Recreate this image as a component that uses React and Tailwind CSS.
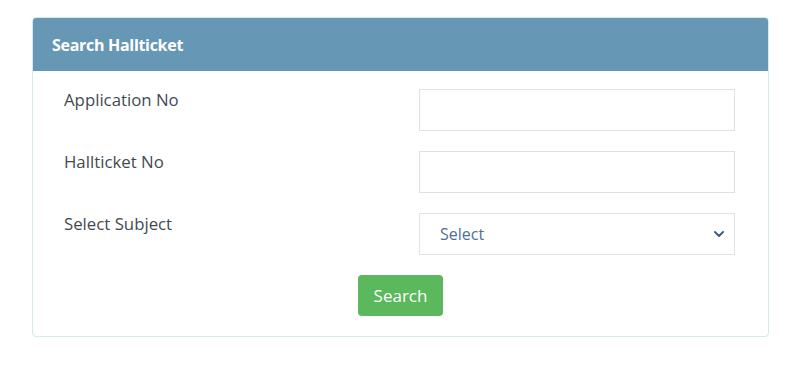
import { ChevronDown } from 'lucide-react'

const fields = [
  { label: 'Application No', type: 'text' },
  { label: 'Hallticket No', type: 'text' },
  { label: 'Select Subject', type: 'select' },
]

const App = () => {
  return (
    <div className="w-[802px] h-[372px] bg-white pt-[17px] pl-[32px] font-['Open_Sans',sans-serif]">
      <div className="w-[737px] border border-[#d3e9ed] rounded-[4px] overflow-hidden">
        <div className="h-[53px] bg-[#6697b4] flex items-center px-[19px]">
          <h2 className="text-white font-bold text-[16px] tracking-[-0.3px]">Search Hallticket</h2>
        </div>

        <div className="px-[31px] pt-[18px] pb-[20px]">
          <div className="flex flex-col gap-[20px]">
            {fields.map((field) => (
              <div key={field.label} className="flex items-start">
                <label className="w-[355px] text-[16.8px] text-[#3f4a52] leading-[22px]">
                  {field.label}
                </label>
                {field.type === 'select' ? (
                  <div className="w-[316px] h-[42px] border border-[#dde4ea] flex items-center justify-between pl-[20px] pr-[7px]">
                    <span className="text-[16px] text-[#4f6f97]">Select</span>
                    <ChevronDown size={16} strokeWidth={3} className="text-[#3c5f8a]" />
                  </div>
                ) : (
                  <input
                    type="text"
                    className="w-[316px] h-[42px] border border-[#dde2e8] outline-none px-3"
                  />
                )}
              </div>
            ))}
          </div>

          <div className="flex justify-center mt-[20px]">
            <button className="w-[85px] h-[41px] bg-[#5cb85c] rounded-[4px] text-white text-[17px]">
              Search
            </button>
          </div>
        </div>
      </div>
    </div>
  )
}

export default App
